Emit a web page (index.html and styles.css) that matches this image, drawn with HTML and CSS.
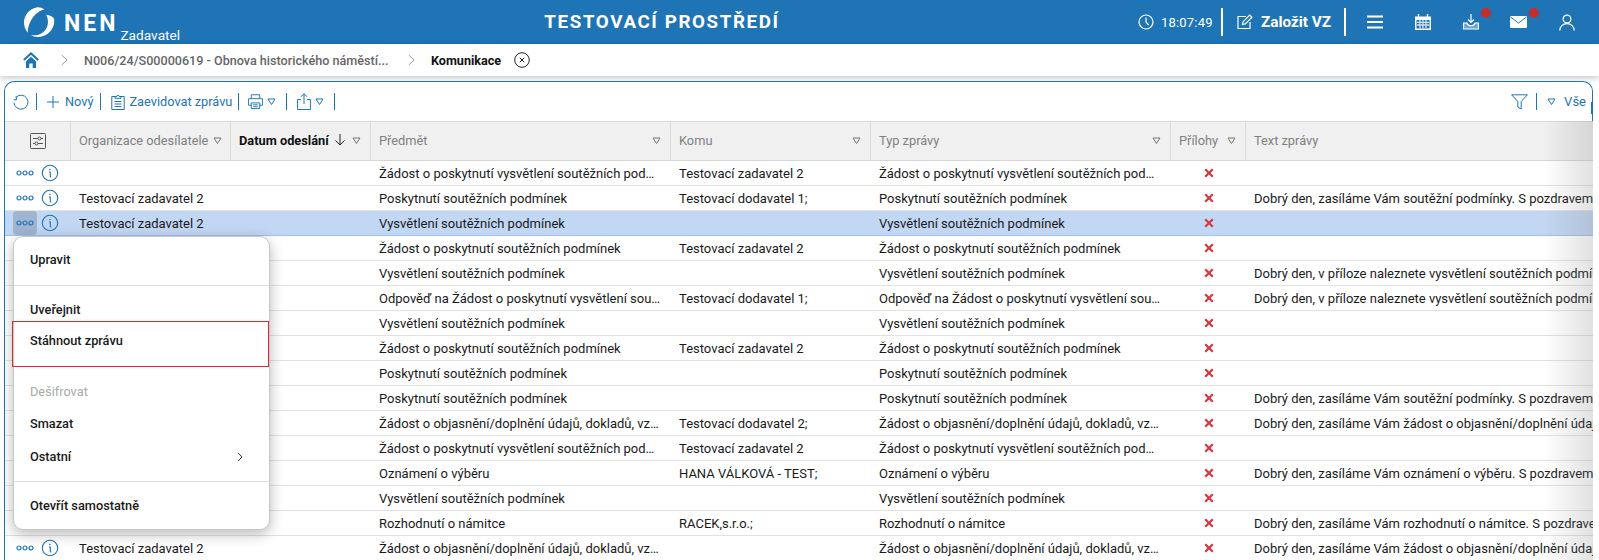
FILE: index.html
```html
<!DOCTYPE html>
<html lang="cs">
<head>
<meta charset="utf-8">
<title>NEN Zadavatel</title>
<link rel="stylesheet" href="styles.css">
</head>
<body>
<svg class="defs" width="0" height="0">
  <symbol id="dots" viewBox="0 0 18 6"><g fill="none" stroke="#1e74b4" stroke-width="1.2"><circle cx="3" cy="3" r="2"/><circle cx="9" cy="3" r="2"/><circle cx="15" cy="3" r="2"/></g></symbol>
  <symbol id="info" viewBox="0 0 18 18"><circle cx="9" cy="9" r="7.7" fill="none" stroke="#1e74b4" stroke-width="1.1"/><path d="M8 8h1.300v4.400c0 .5.4.6 1 .4" fill="none" stroke="#1e74b4" stroke-width="1.1"/><circle cx="8.900" cy="5.500" r=".8" fill="#1e74b4"/></symbol>
  <symbol id="x" viewBox="0 0 10 10"><path d="M1.200 1.200l7.600 7.600M8.800 1.200L1.200 8.800" stroke="#d7373f" stroke-width="2.200" fill="none"/></symbol>
  <symbol id="tri" viewBox="0 0 9 9"><path d="M1 2h7L4.500 7.500z" fill="none" stroke="currentColor" stroke-width="1"/></symbol>
</svg>

<header class="topbar">
  <div class="brand">
    <svg class="logo" viewBox="0 0 32 32"><path d="M21 2.500C18.500.8 15.500 0 13 .5 5 2 0 9 0 16c0 4 1.500 7.500 4 10.500C3.500 18 10 5 21 2.500z" fill="#fff"/><path d="M31 12c1.500 10-6 18.500-16 19-3 .2-6-.5-8-2 8 1.500 16-3 17.500-11 .6-3.500 0-7-1.500-10 4 .5 6.800 2 8 4z" fill="#fff"/></svg>
    <span class="brand-name">NEN</span>
    <span class="brand-role">Zadavatel</span>
  </div>
  <div class="env-title">TESTOVACÍ PROSTŘEDÍ</div>
  <div class="top-actions">
    <svg class="ti clock" viewBox="0 0 16 16"><circle cx="8" cy="8" r="7" fill="none" stroke="#fff" stroke-width="1.2"/><path d="M8 3.500V8l2.600 3" fill="none" stroke="#fff" stroke-width="1.2"/></svg>
    <span class="time">18:07:49</span>
    <span class="top-sep"></span>
    <svg class="ti edit" viewBox="0 0 16 16"><path d="M9 2.500H1v12h12V8" fill="none" stroke="#fff" stroke-width="1.200"/><path d="M5.500 10.500l.6-2.800L12.700 1l2.200 2.200-6.600 6.700z" fill="none" stroke="#fff" stroke-width="1.200"/></svg>
    <span class="create">Založit VZ</span>
    <span class="top-sep"></span>
    <svg class="ti burger" viewBox="0 0 16 14"><path d="M0 1.500h16M0 7h16M0 12.500h16" stroke="#fff" stroke-width="1.800"/></svg>
    <svg class="ti cal" viewBox="0 0 16 16"><path d="M0 2.500h16V16H0z" fill="#fff"/><path d="M3.500 0v3M12.500 0v3" stroke="#fff" stroke-width="1.400"/><path d="M1.500 6h13v8.500h-13z" fill="#1e74b4"/><path d="M2 8.300h12M2 11h12M5 6v8.500M8 6v8.500M11 6v8.500" stroke="#cfe0ef" stroke-width="1.300"/></svg>
    <span class="badged badged-down">
      <svg class="ti down" viewBox="0 0 16 16"><path d="M8 0v8M5 5.500L8 8.500l3-3" fill="none" stroke="#fff" stroke-width="1.200"/><path d="M4 9H.6v6h14.800V9H12c-.5 2-2 2.700-4 2.700S4.500 11 4 9z" fill="#6ea6d2" stroke="#fff" stroke-width="1.100"/></svg>
      <span class="dot"></span>
    </span>
    <span class="badged badged-mail">
      <svg class="ti mail" viewBox="0 0 17 12"><rect width="17" height="12" rx="1" fill="#fff"/><path d="M.5 1L8.500 7l8-6" fill="none" stroke="#1e74b4"/></svg>
      <span class="dot"></span>
    </span>
    <svg class="ti user" viewBox="0 0 16 17"><circle cx="8" cy="5" r="3.900" fill="none" stroke="#fff" stroke-width="1.200"/><path d="M.8 16.500c0-4 3-6.800 7.200-6.800s7.200 2.800 7.200 6.800" fill="none" stroke="#fff" stroke-width="1.200"/></svg>
  </div>
</header>

<nav class="crumbs">
  <svg class="home" viewBox="0 0 16 16"><path d="M.8 8L8 1.400 15.200 8" fill="none" stroke="#1e74b4" stroke-width="2"/><path d="M3 9.200L8 4.700l5 4.500V16H9.700v-4.500H6.300V16H3z" fill="#1e74b4"/></svg>
  <svg class="chev" viewBox="0 0 8 12"><path d="M1 .5L7 6l-6 5.500" fill="none" stroke="#888" stroke-width="1"/></svg>
  <span class="crumb">N006/24/S00000619 - Obnova historického náměstí...</span>
  <svg class="chev" viewBox="0 0 8 12"><path d="M1 .5L7 6l-6 5.500" fill="none" stroke="#888" stroke-width="1"/></svg>
  <span class="crumb-current">Komunikace</span>
  <svg class="crumb-close" viewBox="0 0 16 16"><circle cx="8" cy="8" r="7.300" fill="none" stroke="#222" stroke-width="1"/><path d="M5.800 5.800l4.400 4.400M10.200 5.800l-4.400 4.400" stroke="#222" stroke-width="1"/></svg>
</nav>

<main class="panel">
  <div class="toolbar">
    <svg class="tb-icon refresh" viewBox="0 0 16 16"><path d="M2.800 3.500A7 7 0 1 1 1 8.500" fill="none" stroke="#1e74b4" stroke-width="1"/><path d="M.5 6l3-.3-.4-3.400" fill="none" stroke="#1e74b4" stroke-width="1"/></svg>
    <span class="tb-sep"></span>
    <svg class="tb-icon plus" viewBox="0 0 12 12"><path d="M6 0v12M0 6h12" stroke="#1e74b4" stroke-width="1"/></svg>
    <span class="tb-text">Nový</span>
    <span class="tb-sep"></span>
    <svg class="tb-icon clip" viewBox="0 0 14 16"><path d="M4 2.500H.8v13h12.400v-13H10" fill="none" stroke="#1e74b4"/><path d="M4 4.300V2.500h1.800a1.200 1.200 0 0 1 2.400 0H10v1.800zM3.500 7.500h7M3.500 10h7M3.500 12.500h7" fill="none" stroke="#1e74b4"/></svg>
    <span class="tb-text">Zaevidovat zprávu</span>
    <span class="tb-sep after-text"></span>
    <svg class="tb-icon print" viewBox="0 0 16 16"><path d="M3.500 5V.8h9V5M3.500 12H.6V5h14.800v7h-2.900M3.500 9.500h9v6h-9zM5.500 11.500h5M5.500 13.500h5" fill="none" stroke="#1e74b4"/></svg>
    <svg class="tb-tri"><use href="#tri"/></svg>
    <span class="tb-sep wide"></span>
    <svg class="tb-icon share" viewBox="0 0 14 17"><path d="M4 6.500H.6v10h12.800v-10H10M7 11V1M4 3.800L7 .8l3 3" fill="none" stroke="#1e74b4"/></svg>
    <svg class="tb-tri"><use href="#tri"/></svg>
    <span class="tb-sep wide"></span>
    <span class="tb-fill"></span>
    <svg class="tb-icon funnel" viewBox="0 0 17 16"><path d="M.6.800h15.800L10.200 7.500V15l-3.400-2V7.500z" fill="none" stroke="#1e74b4"/></svg>
    <span class="tb-sep filter-sep"></span>
    <svg class="tb-tri all"><use href="#tri"/></svg>
    <span class="tb-text all-text">Vše</span>
  </div>

  <div class="grid-wrap">
    <table class="grid">
      <colgroup>
        <col class="c-act"><col class="c-org"><col class="c-date"><col class="c-subj"><col class="c-to"><col class="c-type"><col class="c-att"><col class="c-text">
      </colgroup>
      <thead>
        <tr>
          <th class="settings-cell"><svg class="settings" viewBox="0 0 16 16"><rect x=".5" y=".5" width="15" height="15" rx="1" fill="none" stroke="#555"/><path d="M3 5.500h5M11 5.500h2M3 10.500h2M8 10.500h5" stroke="#555"/><circle cx="9.500" cy="5.500" r="1.500" fill="none" stroke="#555"/><circle cx="6.500" cy="10.500" r="1.500" fill="none" stroke="#555"/></svg></th>
          <th><div class="th-in"><span>Organizace odesílatele</span><svg class="th-tri"><use href="#tri"/></svg></div></th>
          <th class="sorted"><div class="th-in"><span>Datum odeslání</span><svg class="arrow" viewBox="0 0 12 12"><path d="M6 0v11M1.500 6.500L6 11l4.500-4.500" fill="none" stroke="#222"/></svg><svg class="th-tri"><use href="#tri"/></svg></div></th>
          <th><div class="th-in spread"><span>Předmět</span><svg class="th-tri"><use href="#tri"/></svg></div></th>
          <th><div class="th-in spread"><span>Komu</span><svg class="th-tri"><use href="#tri"/></svg></div></th>
          <th><div class="th-in spread"><span>Typ zprávy</span><svg class="th-tri"><use href="#tri"/></svg></div></th>
          <th><div class="th-in spread"><span>Přílohy</span><svg class="th-tri"><use href="#tri"/></svg></div></th>
          <th><div class="th-in"><span>Text zprávy</span></div></th>
        </tr>
      </thead>
      <tbody>
        <tr><td class="acts"><span class="more"><svg class="ic-dots"><use href="#dots"/></svg></span><svg class="ic-info"><use href="#info"/></svg></td><td></td><td></td><td>Žádost o poskytnutí vysvětlení soutěžních pod…</td><td>Testovací zadavatel 2</td><td>Žádost o poskytnutí vysvětlení soutěžních pod…</td><td class="att"><svg class="ic-x"><use href="#x"/></svg></td><td></td></tr>
        <tr><td class="acts"><span class="more"><svg class="ic-dots"><use href="#dots"/></svg></span><svg class="ic-info"><use href="#info"/></svg></td><td>Testovací zadavatel 2</td><td></td><td>Poskytnutí soutěžních podmínek</td><td>Testovací dodavatel 1;</td><td>Poskytnutí soutěžních podmínek</td><td class="att"><svg class="ic-x"><use href="#x"/></svg></td><td>Dobrý den, zasíláme Vám soutěžní podmínky. S pozdravem</td></tr>
        <tr class="selected"><td class="acts"><span class="more open"><svg class="ic-dots"><use href="#dots"/></svg></span><svg class="ic-info"><use href="#info"/></svg></td><td>Testovací zadavatel 2</td><td></td><td>Vysvětlení soutěžních podmínek</td><td></td><td>Vysvětlení soutěžních podmínek</td><td class="att"><svg class="ic-x"><use href="#x"/></svg></td><td></td></tr>
        <tr><td class="acts"></td><td></td><td></td><td>Žádost o poskytnutí soutěžních podmínek</td><td>Testovací zadavatel 2</td><td>Žádost o poskytnutí soutěžních podmínek</td><td class="att"><svg class="ic-x"><use href="#x"/></svg></td><td></td></tr>
        <tr><td class="acts"></td><td></td><td></td><td>Vysvětlení soutěžních podmínek</td><td></td><td>Vysvětlení soutěžních podmínek</td><td class="att"><svg class="ic-x"><use href="#x"/></svg></td><td>Dobrý den, v příloze naleznete vysvětlení soutěžních podmínek</td></tr>
        <tr><td class="acts"></td><td></td><td></td><td>Odpověď na Žádost o poskytnutí vysvětlení sou…</td><td>Testovací dodavatel 1;</td><td>Odpověď na Žádost o poskytnutí vysvětlení sou…</td><td class="att"><svg class="ic-x"><use href="#x"/></svg></td><td>Dobrý den, v příloze naleznete vysvětlení soutěžních podmínek</td></tr>
        <tr><td class="acts"></td><td></td><td></td><td>Vysvětlení soutěžních podmínek</td><td></td><td>Vysvětlení soutěžních podmínek</td><td class="att"><svg class="ic-x"><use href="#x"/></svg></td><td></td></tr>
        <tr><td class="acts"></td><td></td><td></td><td>Žádost o poskytnutí soutěžních podmínek</td><td>Testovací zadavatel 2</td><td>Žádost o poskytnutí soutěžních podmínek</td><td class="att"><svg class="ic-x"><use href="#x"/></svg></td><td></td></tr>
        <tr><td class="acts"></td><td></td><td></td><td>Poskytnutí soutěžních podmínek</td><td></td><td>Poskytnutí soutěžních podmínek</td><td class="att"><svg class="ic-x"><use href="#x"/></svg></td><td></td></tr>
        <tr><td class="acts"></td><td></td><td></td><td>Poskytnutí soutěžních podmínek</td><td></td><td>Poskytnutí soutěžních podmínek</td><td class="att"><svg class="ic-x"><use href="#x"/></svg></td><td>Dobrý den, zasíláme Vám soutěžní podmínky. S pozdravem</td></tr>
        <tr><td class="acts"></td><td></td><td></td><td>Žádost o objasnění/doplnění údajů, dokladů, vz…</td><td>Testovací dodavatel 2;</td><td>Žádost o objasnění/doplnění údajů, dokladů, vz…</td><td class="att"><svg class="ic-x"><use href="#x"/></svg></td><td>Dobrý den, zasíláme Vám žádost o objasnění/doplnění údajů</td></tr>
        <tr><td class="acts"></td><td></td><td></td><td>Žádost o poskytnutí vysvětlení soutěžních pod…</td><td>Testovací zadavatel 2</td><td>Žádost o poskytnutí vysvětlení soutěžních pod…</td><td class="att"><svg class="ic-x"><use href="#x"/></svg></td><td></td></tr>
        <tr><td class="acts"></td><td></td><td></td><td>Oznámení o výběru</td><td>HANA VÁLKOVÁ - TEST;</td><td>Oznámení o výběru</td><td class="att"><svg class="ic-x"><use href="#x"/></svg></td><td>Dobrý den, zasíláme Vám oznámení o výběru. S pozdravem</td></tr>
        <tr><td class="acts"></td><td></td><td></td><td>Vysvětlení soutěžních podmínek</td><td></td><td>Vysvětlení soutěžních podmínek</td><td class="att"><svg class="ic-x"><use href="#x"/></svg></td><td></td></tr>
        <tr><td class="acts"></td><td></td><td></td><td>Rozhodnutí o námitce</td><td>RACEK,s.r.o.;</td><td>Rozhodnutí o námitce</td><td class="att"><svg class="ic-x"><use href="#x"/></svg></td><td>Dobrý den, zasíláme Vám rozhodnutí o námitce. S pozdravem</td></tr>
        <tr><td class="acts"><span class="more"><svg class="ic-dots"><use href="#dots"/></svg></span><svg class="ic-info"><use href="#info"/></svg></td><td>Testovací zadavatel 2</td><td></td><td>Žádost o objasnění/doplnění údajů, dokladů, vz…</td><td></td><td>Žádost o objasnění/doplnění údajů, dokladů, vz…</td><td class="att"><svg class="ic-x"><use href="#x"/></svg></td><td>Dobrý den, zasíláme Vám žádost o objasnění/doplnění údajů</td></tr>
      </tbody>
    </table>
    <div class="edge-fade"></div>
  </div>

  <div class="menu">
    <div class="menu-group first"><div class="menu-item">Upravit</div></div>
    <div class="menu-group second">
      <div class="menu-item">Uveřejnit</div>
      <div class="menu-item highlighted">Stáhnout zprávu</div>
    </div>
    <div class="menu-group third">
      <div class="menu-item disabled">Dešifrovat</div>
      <div class="menu-item">Smazat</div>
      <div class="menu-item has-sub">Ostatní<svg class="sub-chev" viewBox="0 0 6 10"><path d="M1 .8L5 5 1 9.200" fill="none" stroke="#333"/></svg></div>
    </div>
    <div class="menu-group last"><div class="menu-item">Otevřít samostatně</div></div>
  </div>
</main>
</body>
</html>
```
FILE: styles.css
```css
* { box-sizing: border-box; }
html, body { margin: 0; padding: 0; height: 560px; overflow: hidden; background: #fff; }
body { font-family: Roboto, "Liberation Sans", sans-serif; font-size: 13px; color: #1a1a1a; }
.defs { position: absolute; }

.topbar { height: 44px; background: #1e74b4; color: #fff; display: flex; align-items: center; }
.brand { width: 270px; height: 44px; padding-left: 24px; display: flex; align-items: flex-start; }
.logo { width: 31px; height: 31px; margin-top: 7px; flex: none; }
.brand-name { font-size: 23px; font-weight: 700; letter-spacing: 3px; margin: 12px 0 0 9px; line-height: 24px; }
.brand-role { font-size: 13.700px; line-height: 16px; margin: 27px 0 0 2px; }
.env-title { width: 784px; text-align: center; font-size: 18.800px; font-weight: 700; letter-spacing: 1.600px; }
.top-actions { flex: 1; display: flex; align-items: center; height: 44px; }
.ti { flex: none; display: block; }
.clock { width: 16px; height: 16px; margin-left: 84px; }
.time { font-size: 13px; margin-left: 7px; width: 50px; letter-spacing: .2px; white-space: nowrap; }
.top-sep { width: 2px; height: 28px; background: #fff; margin-left: 10px; flex: none; }
.edit { width: 16px; height: 16px; margin-left: 14px; }
.create { font-size: 15.300px; font-weight: 700; margin-left: 8px; width: 71px; white-space: nowrap; }
.create + .top-sep { margin-left: 12px; }
.burger { width: 16px; height: 14px; margin-left: 21px; }
.cal { width: 16px; height: 16px; margin-left: 32px; }
.badged { position: relative; display: block; flex: none; }
.down { width: 16px; height: 16px; margin-left: 32px; }
.mail { width: 17px; height: 12px; margin-left: 31px; }
.user { width: 16px; height: 17px; margin-left: 32px; }
.dot { position: absolute; width: 10px; height: 10px; border-radius: 50%; background: #c62d2d; right: -12px; }
.badged-down .dot { top: -6px; }
.badged-mail .dot { top: -8px; }

.crumbs { height: 32px; display: flex; align-items: center; background: #fff; box-shadow: 0 2px 6px rgba(0,0,0,.22); position: relative; padding-left: 23px; }
.home { width: 16px; height: 16px; flex: none; }
.chev { width: 7px; height: 12px; flex: none; margin-left: 22px; }
.crumb { font-size: 12.600px; font-weight: 500; color: #666; margin-left: 16px; width: 306px; white-space: nowrap; }
.crumb + .chev { margin-left: 18px; }
.crumb-current { font-size: 12.600px; font-weight: 700; color: #111; margin-left: 16px; }
.crumb-close { width: 16px; height: 16px; margin-left: 13px; flex: none; }

.panel { position: relative; margin: 5px 6px 0 4px; height: 479px; border: 1px solid #1e74b4; border-bottom: 0; border-radius: 10px 10px 0 0; }
.toolbar { position: relative; height: 39px; display: flex; align-items: center; color: #1e74b4; padding-left: 8px; }
.toolbar::after { content: ""; position: absolute; right: -1px; top: 20px; width: 2px; height: 12px; background: #1e74b4; }
.tb-icon { flex: none; display: block; }
.refresh { width: 16px; height: 16px; }
.tb-sep { width: 1px; height: 17px; background: #1e74b4; margin: 0 9px 0 7px; flex: none; }
.refresh + .tb-sep { margin-right: 10px; }
.tb-sep.after-text { margin-left: 6px; }
.plus { width: 12px; height: 12px; margin-right: 6px; }
.tb-text { font-size: 12.750px; color: #1e74b4; white-space: nowrap; }
.clip { width: 14px; height: 16px; margin: 0 4px 0 1px; }
.print { width: 15px; height: 15px; }
.tb-tri { width: 9px; height: 9px; margin-left: 4px; flex: none; color: #1e74b4; }
.tb-sep.wide { margin: 0 10px; }
.share { width: 14px; height: 17px; }
.tb-fill { flex: 1; }
.funnel { width: 17px; height: 16px; }
.tb-sep.filter-sep { margin: 0 10px 0 8px; }
.tb-tri.all { margin-left: 0; margin-right: 8px; }
.all-text { margin-right: 6px; font-size: 13px; }

.grid-wrap { position: relative; overflow: hidden; height: 440px; margin-right: -1px; background: #fff; }
.grid { table-layout: fixed; border-collapse: separate; border-spacing: 0; width: 1701px; }
.c-act { width: 66px; } .c-org { width: 160px; } .c-date { width: 140px; } .c-subj { width: 300px; }
.c-to { width: 200px; } .c-type { width: 300px; } .c-att { width: 75px; } .c-text { width: 460px; }
th { height: 40px; background: #f0f0f0; border-top: 1px solid #dcdcdc; border-bottom: 1px solid #d6d6d6; border-right: 1px solid #dcdcdc; font-weight: 400; font-size: 12.800px; color: #808080; text-align: left; padding: 0 9px 0 8px; white-space: nowrap; }
th:last-child { border-right: 0; }
.th-in { display: flex; align-items: center; gap: 5px; margin-top: -2px; }
.th-in.spread { justify-content: space-between; }
.th-tri { width: 9px; height: 9px; color: #777; flex: none; }
.sorted { color: #111; font-weight: 700; }
.arrow { width: 12px; height: 12px; flex: none; margin-right: 1px; }
.settings-cell { padding: 0; text-align: center; }
.settings { width: 16px; height: 16px; display: block; margin: 0 auto; }

td { height: 25px; padding: 0 8px; font-size: 13px; color: #1a1a1a; background: #fff; border-bottom: 1px solid #e2e2e2; white-space: nowrap; overflow: hidden; }
.acts { padding: 0 0 0 8px; }
.acts .ic-info { vertical-align: middle; }
.more { display: inline-flex; width: 24px; height: 24px; align-items: center; justify-content: center; border-radius: 4px; vertical-align: middle; margin-right: 4px; }
.more.open { background: #9fb5d0; }
.ic-dots { width: 18px; height: 6px; }
.ic-info { width: 18px; height: 18px; margin-top: -1px; }
.att { text-align: center; padding: 0 0 3px; }
.ic-x { width: 10px; height: 10px; display: inline-block; vertical-align: middle; }
.selected td { background: #c2d7f3; border-bottom-color: #a3c1e8; }

.edge-fade { position: absolute; right: 0; top: 0; bottom: 0; width: 50px; background: linear-gradient(to right, rgba(120,120,120,0), rgba(120,120,120,.22)); }

.menu { position: absolute; left: 8px; top: 154px; width: 257px; height: 294px; background: #fff; border: 1px solid #c8c8c8; border-radius: 10px; box-shadow: 0 4px 14px rgba(0,0,0,.28); display: flex; flex-direction: column; font-size: 12.750px; font-weight: 500; color: #1a1a1a; }
.menu-group { border-bottom: 1px solid #dedede; }
.menu-group.first { height: 49px; }
.menu-group.first .menu-item { margin-top: 7px; }
.menu-group.second { height: 81px; border-bottom: 0; padding-top: 8px; }
.menu-group.third { height: 115px; padding-top: 9px; }
.menu-group.last { border-bottom: 0; }
.menu-group.last .menu-item { margin-top: 8px; }
.menu-item { height: 32px; line-height: 32px; padding-left: 16px; }
.menu-item.highlighted { height: 46px; line-height: 38px; margin: -5px 0 0 -2px; padding-left: 17px; border: 1px solid #e0262e; }
.menu-item.disabled { color: #a9a9a9; font-weight: 400; }
.has-sub { display: flex; align-items: center; justify-content: space-between; padding-right: 26px; margin-top: 1px; }
.sub-chev { width: 6px; height: 10px; }
```
